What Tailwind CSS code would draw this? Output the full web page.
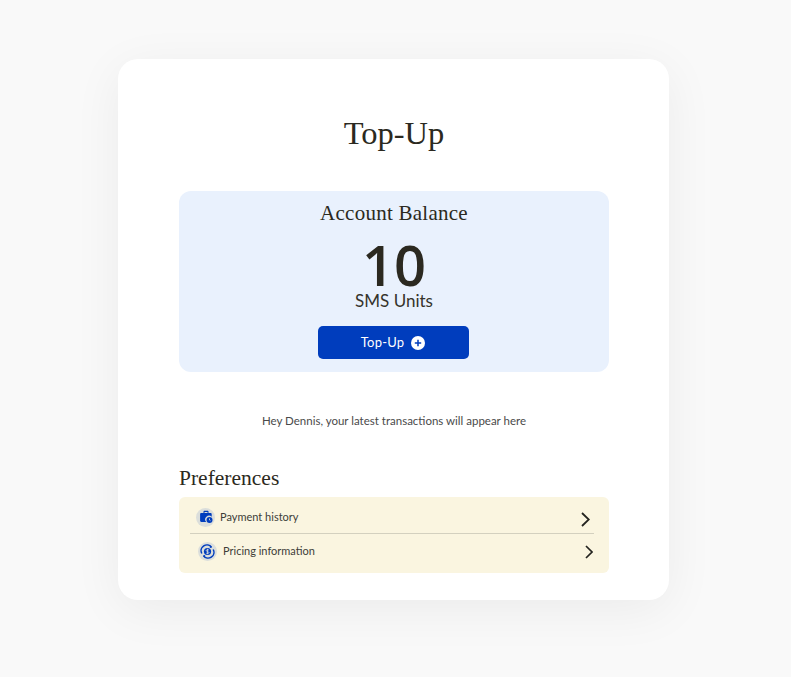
<!DOCTYPE html>
<html lang="en">
<head>
  <meta charset="UTF-8">
  <meta name="viewport" content="width=device-width, initial-scale=1.0">
  <title>Top-Up</title>
  <script src="https://cdn.jsdelivr.net/npm/@tailwindcss/browser@4"></script>
</head>
<body class="bg-[#f9f9f9] h-[677px] overflow-hidden pt-[59px] font-['Lato',sans-serif] text-[#2b2920]">
  <div class="ml-[118px] w-[551px] h-[541px] bg-white rounded-[20px] shadow-[0_10px_50px_rgba(0,0,0,0.06)] pl-[61px] pr-[60px] pt-[54px]">
    <h1 class="font-['Liberation_Serif',serif] text-[32.5px] leading-[40px] text-center font-normal">Top-Up</h1>

    <!-- balance -->
    <div class="mt-[38px] h-[181px] bg-[#e9f1fd] rounded-[12px] flex flex-col items-center pt-[8px]">
      <h2 class="font-['Liberation_Serif',serif] text-[21px] leading-[28px] tracking-[0.25px]">Account Balance</h2>
      <div class="mt-[11px] text-[56px] leading-[52px] font-['Open_Sans',sans-serif] font-semibold">10</div>
      <div class="text-[17px] leading-[20px] mt-[1px] text-[#35332b]">SMS Units</div>
      <button class="mt-[15px] w-[151px] h-[33px] -translate-x-[1px] bg-[#003dbd] rounded-[5px] text-white text-[13px] tracking-[0.2px] flex items-center justify-center gap-[7px]">
        Top-Up
        <svg class="w-[14px] h-[14px]" viewBox="0 0 14 14"><circle cx="7" cy="7" r="7" fill="#fff"/><path d="M7 3.800v6.400M3.800 7h6.400" stroke="#003dbd" stroke-width="1.500"/></svg>
      </button>
    </div>

    <p class="mt-[41px] text-center text-[11.5px] leading-[16px] text-[#4a4a4a]">Hey Dennis, your latest transactions will appear here</p>

    <h2 class="mt-[36px] font-['Liberation_Serif',serif] text-[21.5px] leading-[26px]">Preferences</h2>

    <!-- preferences -->
    <div class="mt-[6px] h-[76px] bg-[#faf5e0] rounded-[6px] pl-[11px] pr-[15px]">
      <div class="h-[37px] pt-[4px] border-b border-[#d3d0bf] flex items-center pl-[6px] pr-[4px]">
        <span class="w-[19px] h-[19px] rounded-full bg-[#dbdedb] flex items-center justify-center">
          <svg class="w-[14px] h-[14px]" viewBox="0 0 14 14" fill="#003dbd">
            <path d="M4.500 3V1.800C4.500 1.200 5 .8 5.500.8h3c.6 0 1 .4 1 1V3h2c.7 0 1.200.5 1.200 1.200v2.600A3.600 3.600 0 0 0 7.300 12H2.300c-.7 0-1.200-.5-1.200-1.200V4.200c0-.7.5-1.200 1.200-1.200zm1-1v1h3V2z"/>
            <circle cx="10.500" cy="10" r="3"/>
            <path d="M10.500 8.500V10l1 .7" stroke="#dbdedb" stroke-width=".8" fill="none"/>
          </svg>
        </span>
        <span class="ml-[5px] text-[11px] text-[#3d3d38]">Payment history</span>
        <svg class="ml-auto w-[9px] h-[15px] translate-y-[2px]" viewBox="0 0 9 15" fill="none" stroke="#23231f" stroke-width="1.800"><path d="M1 1l6.800 6.500L1 14"/></svg>
      </div>
      <div class="h-[35px] flex items-center pl-[8px] pr-[1px]">
        <span class="w-[19px] h-[19px] rounded-full bg-[#dbdedb] flex items-center justify-center">
          <svg class="w-[15px] h-[15px]" viewBox="0 0 15 15" fill="none" stroke="#003dbd">
            <path d="M1.800 9.500A5.800 5.800 0 0 1 11.500 3.200M13.200 5.500A5.800 5.800 0 0 1 3.500 11.800" stroke-width="1.500"/>
            <path d="M10.500 1.500l1.500 2-2.300.6zM4.500 13.500l-1.500-2 2.300-.6z" fill="#003dbd" stroke="none"/>
            <circle cx="7.500" cy="7.500" r="3.600" fill="#003dbd" stroke="none"/>
            <path d="M9 6.200c-.5-.6-2.800-.8-2.800.4S9 7.400 9 8.600 6.500 9.500 6 8.900M7.500 4.800v5.400" stroke="#dbdedb" stroke-width=".8"/>
          </svg>
        </span>
        <span class="ml-[6px] text-[11px] text-[#3d3d38]">Pricing information</span>
        <svg class="ml-auto w-[8px] h-[14px]" viewBox="0 0 8 14" fill="none" stroke="#23231f" stroke-width="1.700"><path d="M1 1l6 6-6 6"/></svg>
      </div>
    </div>
  </div>
</body>
</html>
